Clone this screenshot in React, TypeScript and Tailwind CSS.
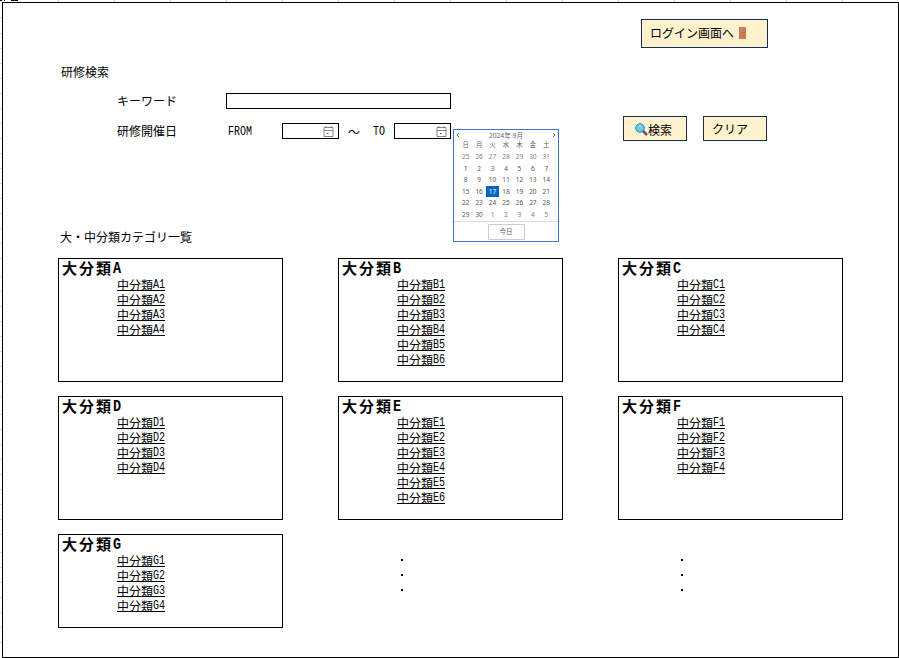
import React from "react";

const Latin = ({ children, bold = false }: { children: string; bold?: boolean }) => (
  <span
    className="inline-block h-full align-top"
    style={{ width: children.length * (bold ? 9 : 6) }}
  >
    <span
      className={
        bold
          ? "block origin-left translate-y-[2px] scale-x-[0.84] font-['Liberation_Mono',monospace] text-[16px] font-bold tracking-normal"
          : "block origin-left scale-x-[0.77] font-['Liberation_Mono',monospace] text-[13px]"
      }
    >
      {children}
    </span>
  </span>
);

function Category({ letter, count, short = false }: { letter: string; count: number; short?: boolean }) {
  return (
    <section className={`w-[225px] border border-black ${short ? "h-[94px]" : "h-[124px]"}`}>
      <h2 className="flex h-[19px] pl-[3px] text-[15px] leading-[17px] font-bold tracking-[2px]">
        大分類<Latin bold>{letter}</Latin>
      </h2>
      <ul className="ml-[58px] w-12">
        {Array.from({ length: count }, (_, i) => (
          <li key={i} className="flex h-[15px]">
            <a className="flex h-[13px] w-12 border-b border-black leading-[13px]">
              中分類<Latin>{`${letter}${i + 1}`}</Latin>
            </a>
          </li>
        ))}
      </ul>
    </section>
  );
}

const Dots = () => (
  <div className="flex w-[225px] flex-col gap-[13px] pt-[25px] pl-[63px]">
    {[0, 1, 2].map((i) => (
      <i key={i} className="size-[2px] bg-black" />
    ))}
  </div>
);

const DateField = ({ end = false }: { end?: boolean }) => (
  <div className={`flex h-4 w-[57px] items-center justify-end border border-black ${end ? "pr-[3px]" : "pr-1"}`}>
    <svg width="11" height="11" viewBox="0 0 11 11" fill="none" stroke="#858585">
      <path d="M1 1.5h9v9H1zM1 4.5h9M3 0v2M8 0v2" />
      <path d="M4 7.5h1.5" stroke="#333" />
    </svg>
  </div>
);

const days = [25, 26, 27, 28, 29, 30, 31, ...Array.from({ length: 30 }, (_, i) => i + 1), 1, 2, 3, 4, 5];

const Calendar = () => (
  <div className="absolute top-[126px] left-[450px] h-[113px] w-[106px] border border-[#4472c4] bg-white font-['Noto_Sans','Noto_Sans_CJK_JP',sans-serif] text-[6.5px] text-[#666]">
    <div className="flex h-[10px] items-center justify-between px-[2px]">
      <svg width="4" height="6" fill="none" stroke="#666"><path d="M3 1L1 3l2 2" /></svg>
      <span className="text-[6.7px]">2024年 9月</span>
      <svg width="4" height="6" fill="none" stroke="#666"><path d="M1 1l2 2-2 2" /></svg>
    </div>
    <div className="ml-[5px] grid w-[94px] grid-cols-7 text-center">
      {"日月火水木金土".split("").map((d) => (
        <span key={d} className="h-[11px] leading-[10px]">{d}</span>
      ))}
      {days.map((d, i) => (
        <span
          key={i}
          className={`h-[11.6px] leading-[12px] ${i === 23 ? "bg-[#0067c0] text-white" : i < 7 || i > 36 ? "text-[#808080]" : "text-[#555]"}`}
        >
          {d}
        </span>
      ))}
    </div>
    <div className="flex h-[19px] items-end justify-center border-t border-[#ddd]">
      <span className="flex h-4 w-[37px] items-center justify-center border border-[#ccc]">今日</span>
    </div>
  </div>
);

const Magnifier = () => (
  <svg width="13" height="13" viewBox="0 0 13 13">
    <path d="M8 8l4 4" stroke="#764487" strokeWidth="2.5" />
    <circle cx="5" cy="5" r="4.3" fill="#62cdef" stroke="#397fad" />
    <path d="M4 3h2" stroke="#a8e7fa" />
  </svg>
);

const Door = () => (
  <svg width="7" height="12">
    <path d="M0 0h7v12H0z" fill="#c87f5c" />
    <path d="M2 5h4v1H2zM3 8h3v1H3z" fill="#b96e4b" />
  </svg>
);

// Heights of the spreadsheet rows left of the frame.
const rows = [
  15, 16, 15, ...Array<number>(14).fill(15), 18, ...Array<number>(8).fill(15), 18,
  ...Array<number>(8).fill(15), 18, ...Array<number>(6).fill(15),
];

export default function App() {
  return (
    <div className="relative h-[658px] w-[899px] overflow-hidden bg-white pt-[2px] pl-[2px] font-['Noto_Sans_CJK_JP',sans-serif] text-[12px] leading-[15px] text-black">
      <div className="absolute top-0 left-[3px] flex h-[2px]">
        {Array.from({ length: 15 }, (_, i) => (
          <i key={i} className="w-14 shrink-0 border-r border-[#d4d4d4]" />
        ))}
      </div>
      <div className="absolute top-[3px] left-0 w-[2px]">
        {rows.map((h, i) => (
          <i key={i} className="block border-b border-[#d4d4d4]" style={{ height: h }} />
        ))}
      </div>
      <div className="absolute top-0 left-0 flex h-px gap-[2px]">
        <i className="w-[2px] bg-black" />
        <i className="w-px bg-black" />
        <i className="ml-1 w-[7px] bg-black" />
      </div>
      <main className="relative h-[656px] w-[897px] border border-black bg-white">
        <div className="flex h-[61px] pt-4 pl-[638px]">
          <button className="flex h-[29px] w-[127px] items-center gap-[5px] border border-[#172c51] bg-[#fff2cc] pb-[2px] pl-[8px]">
            ログイン画面へ<Door />
          </button>
        </div>
        <h1 className="h-[29px] pl-[58px]">研修検索</h1>
        <div className="flex h-[30px] pl-[113px]">
          <label className="w-[110px] pl-px">キーワード</label>
          <div className="h-4 w-[225px] border border-black" />
        </div>
        <div className="flex h-[105px] pl-[113px]">
          <label className="w-[112px] pl-px">研修開催日</label>
          <span className="w-[54px] pt-[1px]"><Latin>FROM</Latin></span>
          <DateField />
          <span className="w-[34px] pt-[1px] pl-[9px]">～</span>
          <span className="w-[21px] pt-[1px]"><Latin>TO</Latin></span>
          <DateField end />
          <div className="-mt-[7px] ml-[172px] flex gap-4">
            <button className="flex h-[25px] w-16 items-center gap-0 border border-[#172c51] bg-[#fff2cc] pt-[2px] pl-[11px]">
              <Magnifier />検索
            </button>
            <button className="flex h-[25px] w-16 items-center border border-[#172c51] bg-[#fff2cc] pl-2">クリア</button>
          </div>
        </div>
        <h1 className="h-[30px] pt-px pl-[57px]">大・中分類カテゴリ一覧</h1>
        <div className="ml-[55px] grid grid-cols-[225px_225px_225px] gap-x-[55px] gap-y-[14px]">
          <Category letter="A" count={4} />
          <Category letter="B" count={6} />
          <Category letter="C" count={4} />
          <Category letter="D" count={4} />
          <Category letter="E" count={6} />
          <Category letter="F" count={4} />
          <Category letter="G" count={4} short />
          <Dots />
          <Dots />
        </div>
        <Calendar />
      </main>
    </div>
  );
}
